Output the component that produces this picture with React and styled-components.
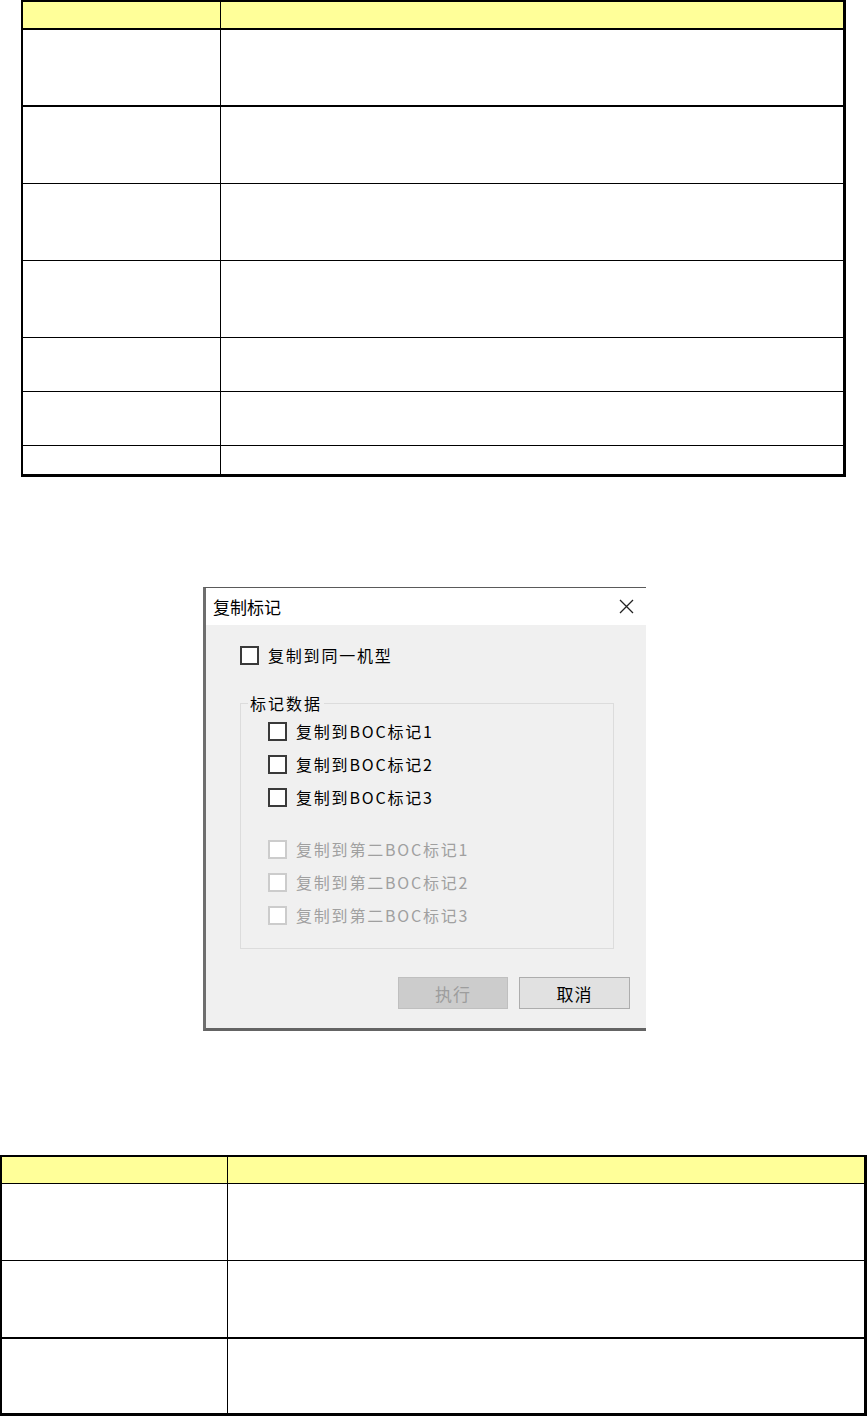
import React from "react";
import styled, { createGlobalStyle } from "styled-components";

const GlobalStyle = createGlobalStyle`
  html, body { margin: 0; padding: 0; background: #ffffff; }
  body { font-family: "Noto Sans CJK SC", "Noto Sans", sans-serif; }
`;

const Page = styled.div`
  width: 867px;
  display: flex;
  flex-direction: column;
`;

const SpecTable = styled.div`
  box-sizing: border-box;
  width: ${(p) => p.$width}px;
  margin: ${(p) => p.$top}px 0 0 ${(p) => p.$left}px;
  border-style: solid;
  border-color: #000;
  border-width: 2px 3px 3px 2px;
  display: flex;
  flex-direction: column;
`;

const TableRow = styled.div`
  display: flex;
  height: ${(p) => p.$h}px;
  border-bottom: ${(p) => p.$line}px solid #000;
  background: ${(p) => (p.$head ? "#ffff99" : "#ffffff")};
`;

const KeyCell = styled.div`
  flex: none;
  width: ${(p) => p.$w}px;
  border-right: 1px solid #000;
`;

const ValueCell = styled.div`
  flex: 1;
`;

const Dialog = styled.div`
  box-sizing: border-box;
  width: 443px;
  margin: 110px 0 0 203px;
  border-top: 1px solid #5a5a5a;
  border-left: 3px solid #6e6e6e;
  border-bottom: 3px solid #646464;
  background: #f0f0f0;
  display: flex;
  flex-direction: column;
  font-family: "Noto Sans CJK SC", "Noto Sans", sans-serif;
`;

const TitleBar = styled.div`
  height: 37px;
  background: #ffffff;
  display: flex;
  align-items: center;
  justify-content: space-between;
  padding: 0 12px 0 7px;
  font-size: 17px;
  color: #000;
`;

const CloseIcon = styled.svg`
  width: 15px;
  height: 15px;
  display: block;
`;

const DialogBody = styled.div`
  display: flex;
  flex-direction: column;
  padding: 21px 16px 19px 34px;
`;

const CheckRow = styled.div`
  display: flex;
  align-items: center;
  gap: 9px;
  height: 19px;
  margin-top: ${(p) => p.$gap || 0}px;
`;

const Box = styled.span`
  box-sizing: border-box;
  width: 19px;
  height: 19px;
  flex: none;
  background: #ffffff;
  border: 2px solid ${(p) => (p.$disabled ? "#cccccc" : "#3a3a3a")};
`;

const Label = styled.span`
  font-size: 16px;
  line-height: 19px;
  letter-spacing: 1.8px;
  color: ${(p) => (p.$disabled ? "#a0a0a0" : "#000000")};
  white-space: nowrap;
`;

const Group = styled.fieldset`
  margin: 28px 16px 0 0;
  padding: 0;
  min-width: 0;
  border: 1px solid #dcdcdc;
`;

const Legend = styled.legend`
  margin-left: 7px;
  padding: 0 2px;
  font-size: 16px;
  line-height: 20px;
  letter-spacing: 2px;
  color: #000;
`;

const GroupInner = styled.div`
  display: flex;
  flex-direction: column;
  gap: 14px;
  padding: 9px 0 23px 27px;
`;

const ButtonRow = styled.div`
  display: flex;
  justify-content: flex-end;
  gap: 11px;
  margin-top: 28px;
`;

const Button = styled.div`
  box-sizing: border-box;
  width: ${(p) => p.$w}px;
  height: 32px;
  display: flex;
  align-items: center;
  justify-content: center;
  font-size: 17px;
  letter-spacing: 1px;
  background: ${(p) => (p.$disabled ? "#cccccc" : "#e1e1e1")};
  border: 1px solid ${(p) => (p.$disabled ? "#bfbfbf" : "#adadad")};
  color: ${(p) => (p.$disabled ? "#9d9d9d" : "#000000")};
`;

const topRows = [
  [26, 2, true],
  [75, 2],
  [76, 1],
  [76, 1],
  [76, 1],
  [53, 1],
  [53, 1],
  [28, 0],
];

const bottomRows = [
  [26, 1, true],
  [76, 1],
  [76, 2],
  [74, 0],
];

function Table({ rows, width, left, top, keyWidth }) {
  return (
    <SpecTable $width={width} $left={left} $top={top}>
      {rows.map(([h, line, head], i) => (
        <TableRow key={i} $h={h} $line={line} $head={head}>
          <KeyCell $w={keyWidth} />
          <ValueCell />
        </TableRow>
      ))}
    </SpecTable>
  );
}

function Check({ label, disabled, gap }) {
  return (
    <CheckRow $gap={gap}>
      <Box $disabled={disabled} />
      <Label $disabled={disabled}>{label}</Label>
    </CheckRow>
  );
}

export default function App() {
  return (
    <Page>
      <GlobalStyle />
      <Table rows={topRows} width={825} left={21} top={0} keyWidth={197} />

      <Dialog>
        <TitleBar>
          <span>复制标记</span>
          <CloseIcon viewBox="0 0 15 15">
            <path d="M1 1 L14 14 M14 1 L1 14" stroke="#222" strokeWidth="1.3" fill="none" />
          </CloseIcon>
        </TitleBar>
        <DialogBody>
          <Check label="复制到同一机型" />
          <Group>
            <Legend>标记数据</Legend>
            <GroupInner>
              <Check label="复制到BOC标记1" />
              <Check label="复制到BOC标记2" />
              <Check label="复制到BOC标记3" />
              <Check label="复制到第二BOC标记1" disabled gap={19} />
              <Check label="复制到第二BOC标记2" disabled />
              <Check label="复制到第二BOC标记3" disabled />
            </GroupInner>
          </Group>
          <ButtonRow>
            <Button $w={110} $disabled>执行</Button>
            <Button $w={111}>取消</Button>
          </ButtonRow>
        </DialogBody>
      </Dialog>

      <Table rows={bottomRows} width={867} left={0} top={124} keyWidth={225} />
    </Page>
  );
}
